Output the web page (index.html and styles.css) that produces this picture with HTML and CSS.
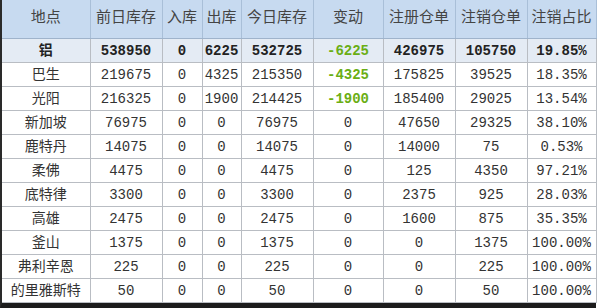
FILE: index.html
```html
<!DOCTYPE html>
<html lang="zh">
<head>
<meta charset="utf-8">
<link rel="stylesheet" href="styles.css">
</head>
<body>
<div class="frame">
<table class="stock">
<colgroup>
<col class="c-name"><col class="c-w72"><col class="c-w40"><col class="c-w39"><col class="c-w72"><col class="c-w70"><col class="c-w72"><col class="c-w72"><col class="c-last">
</colgroup>
<thead>
<tr class="head"><th>地点</th><th>前日库存</th><th>入库</th><th>出库</th><th>今日库存</th><th>变动</th><th>注册仓单</th><th>注销仓单</th><th>注销占比</th></tr>
</thead>
<tbody>
<tr class="total"><td>铝</td><td>538950</td><td>0</td><td>6225</td><td>532725</td><td class="neg">-6225</td><td>426975</td><td>105750</td><td>19.85%</td></tr>
<tr><td>巴生</td><td>219675</td><td>0</td><td>4325</td><td>215350</td><td class="neg">-4325</td><td>175825</td><td>39525</td><td>18.35%</td></tr>
<tr><td>光阳</td><td>216325</td><td>0</td><td>1900</td><td>214425</td><td class="neg">-1900</td><td>185400</td><td>29025</td><td>13.54%</td></tr>
<tr><td>新加坡</td><td>76975</td><td>0</td><td>0</td><td>76975</td><td>0</td><td>47650</td><td>29325</td><td>38.10%</td></tr>
<tr><td>鹿特丹</td><td>14075</td><td>0</td><td>0</td><td>14075</td><td>0</td><td>14000</td><td>75</td><td>0.53%</td></tr>
<tr><td>柔佛</td><td>4475</td><td>0</td><td>0</td><td>4475</td><td>0</td><td>125</td><td>4350</td><td>97.21%</td></tr>
<tr><td>底特律</td><td>3300</td><td>0</td><td>0</td><td>3300</td><td>0</td><td>2375</td><td>925</td><td>28.03%</td></tr>
<tr><td>高雄</td><td>2475</td><td>0</td><td>0</td><td>2475</td><td>0</td><td>1600</td><td>875</td><td>35.35%</td></tr>
<tr><td>釜山</td><td>1375</td><td>0</td><td>0</td><td>1375</td><td>0</td><td>0</td><td>1375</td><td>100.00%</td></tr>
<tr><td>弗利辛恩</td><td>225</td><td>0</td><td>0</td><td>225</td><td>0</td><td>0</td><td>225</td><td>100.00%</td></tr>
<tr><td>的里雅斯特</td><td>50</td><td>0</td><td>0</td><td>50</td><td>0</td><td>0</td><td>50</td><td>100.00%</td></tr>
</tbody>
</table>
</div>
</body>
</html>
```

FILE: styles.css
```css
html, body {
  margin: 0;
  padding: 0;
  background: #ffffff;
}
.frame {
  width: 596px;
  border-left: 2px solid #2a2a2a;
  border-bottom: 5px solid #1c1c1c;
  box-sizing: border-box;
}
.stock {
  border-collapse: collapse;
  table-layout: fixed;
  width: 594px;
  font-family: "Liberation Mono", "Noto Sans CJK SC", monospace;
  font-size: 14px;
  color: #333333;
}
.c-name { width: 88px; }
.c-w72 { width: 72px; }
.c-w40 { width: 40px; }
.c-w39 { width: 39px; }
.c-w70 { width: 70px; }
.c-last { width: 69px; }
.stock th, .stock td {
  padding: 0;
  text-align: center;
  white-space: nowrap;
  overflow: hidden;
  line-height: 16px;
}
.stock th {
  font-weight: normal;
  color: #444444;
  background: #c7daf0;
  border-left: 1px solid #a9bfd8;
  border-right: 1px solid #a9bfd8;
  border-bottom: 1px solid #9fb3cb;
  height: 38px;
  font-size: 15px;
}
.stock td {
  border: 1px solid #b9bdc3;
  height: 23px;
}
.stock tr > :first-child { border-left: none; }
.stock .total td {
  background: #e4ebf4;
  font-weight: bold;
  color: #222222;
}
.stock tr td.neg {
  color: #6aae14;
  font-weight: bold;
}
```
